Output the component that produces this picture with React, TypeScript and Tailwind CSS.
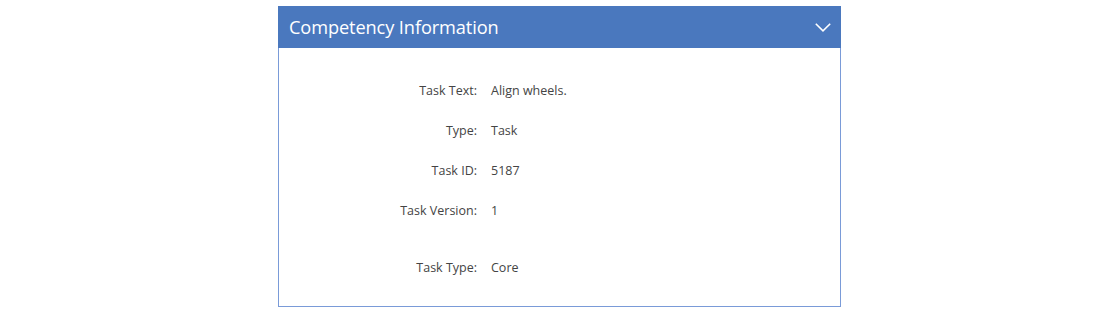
const rows = [
  { label: "Task Text:", value: "Align wheels." },
  { label: "Type:", value: "Task" },
  { label: "Task ID:", value: "5187" },
  { label: "Task Version:", value: "1" },
  { label: "Task Type:", value: "Core", extra: true },
]

export default function App() {
  return (
    <div className="w-[1120px] h-[312px] bg-white pt-[6px]" style={{ fontFamily: '"Open Sans", sans-serif' }}>
      <div className="w-[563px] ml-[278px] border border-[#7a9bd8]">
        <div className="h-[42px] bg-[#4a78be] flex items-center justify-between pl-[11px] pr-[10px] -mx-px -mt-px">
          <h2 className="text-[18.2px] text-white leading-none tracking-[-0.1px]">Competency Information</h2>
          <svg width="16" height="9" viewBox="0 0 16 9" fill="none" stroke="white" strokeWidth="1.6" className="mt-px">
            <polyline points="0.8,0.8 8,7.8 15.2,0.8" />
          </svg>
        </div>
        <div className="pt-[23px] pb-[18px]">
          {rows.map((r) => (
            <div key={r.label} className={`flex items-center h-[40px] text-[12.5px] text-[#444] ${r.extra ? "mt-[17px]" : ""}`}>
              <div className="w-[198px] text-right">{r.label}</div>
              <div className="pl-[14px]">{r.value}</div>
            </div>
          ))}
        </div>
      </div>
    </div>
  )
}
